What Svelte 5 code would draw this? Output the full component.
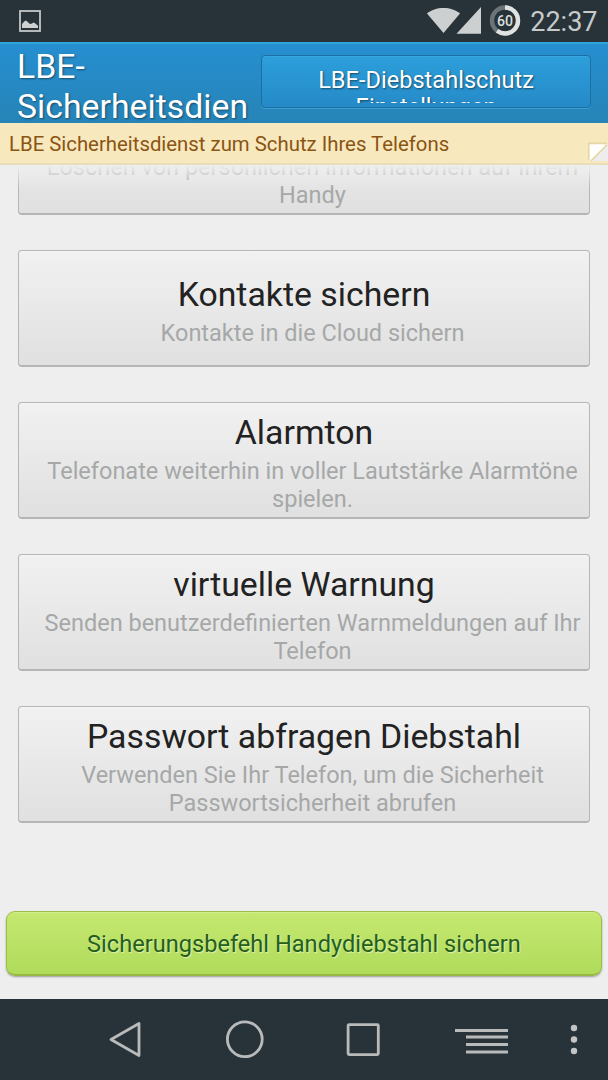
<script lang="ts">
	const battery = 60;
	const ring = 2 * Math.PI * 13;

	const commands = [
		{ title: 'Kontakte sichern', lines: ['Kontakte in die Cloud sichern'] },
		{
			title: 'Alarmton',
			lines: ['Telefonate weiterhin in voller Lautstärke Alarmtöne', 'spielen.']
		},
		{
			title: 'virtuelle Warnung',
			lines: ['Senden benutzerdefinierten Warnmeldungen auf Ihr', 'Telefon']
		},
		{
			title: 'Passwort abfragen Diebstahl',
			lines: ['Verwenden Sie Ihr Telefon, um die Sicherheit', 'Passwortsicherheit abrufen']
		}
	];
</script>

<div class="screen">
	<div class="status-bar">
		<svg class="picture" width="22" height="22" viewBox="0 0 22 22">
			<rect x="1" y="1" width="20" height="20" fill="none" stroke="#c4c7c7" stroke-width="1.8" />
			<path d="M3 18V14L5.5 11.2 7 10.5 9 12.2 11 14 13 13.5 14.5 12.5 16 13.2 19 15.8V18Z" fill="#cfd1d1" />
		</svg>
		<div class="status-icons">
			<svg width="96" height="34" viewBox="0 0 96 34">
				<path d="M0 9.5C8 2 25 2 33 9.5L16.5 29Z" fill="#ccd0d0" />
				<path d="M29.5 29.8 54 3V29.8Z" fill="#ccd0d0" />
				<circle cx="78" cy="16.5" r="13" fill="none" stroke="#6c7478" stroke-width="4.4" />
				<circle
					cx="78"
					cy="16.5"
					r="13"
					fill="none"
					stroke="#e1e3e3"
					stroke-width="4.4"
					stroke-dasharray="{(ring * battery) / 100} {ring}"
					transform="rotate(-90 78 16.5)"
				/>
				<text x="78" y="22.3" text-anchor="middle" textLength="16" lengthAdjust="spacingAndGlyphs" class="level">{battery}</text>
			</svg>
			<span class="clock">22:37</span>
		</div>
	</div>

	<header>
		<h1>LBE-<br />Sicherheitsdien</h1>
		<button class="settings">
			<span>LBE-Diebstahlschutz<br />Einstellungen</span>
		</button>
	</header>

	<div class="notice">
		<span>LBE Sicherheitsdienst zum Schutz Ihres Telefons</span>
		<svg class="fold" width="22" height="22" viewBox="0 0 22 22">
			<path d="M22 3 5 20H22V3Z" fill="#ededed" />
			<path d="M3.5 3.5H20L3.5 20Z" fill="#fff" />
			<path d="M2.7 19V2.2H21M21 4 5 20" fill="none" stroke="#e2d7a5" stroke-width="1.5" />
		</svg>
	</div>

	<main>
		<div class="card partial">
			<p>Löschen von persönlichen Informationen auf Ihrem<br />Handy</p>
		</div>
		{#each commands as command}
			<div class="card">
				<h2>{command.title}</h2>
				<p>
					{#each command.lines as line}
						<span>{line}</span>
					{/each}
				</p>
			</div>
		{/each}
		<div class="fade"></div>
	</main>

	<footer>
		<button class="backup">Sicherungsbefehl Handydiebstahl sichern</button>
	</footer>

	<nav>
		<svg width="608" height="81" viewBox="0 0 608 81" fill="none" stroke="#b9bbbb" stroke-width="2.8">
			<path d="M139 24.5V56.5L111 40.5Z" stroke-linejoin="round" />
			<circle cx="244.8" cy="40.3" r="17.4" />
			<rect x="348.1" y="25.6" width="30.2" height="30" rx="1" />
			<path d="M455 31.5H508M466 38H508M466 45.5H508M466 53H508" />
			<g fill="#c3c5c5" stroke="none">
				<circle cx="574" cy="29" r="3.2" />
				<circle cx="574" cy="40.5" r="3.2" />
				<circle cx="574" cy="52" r="3.2" />
			</g>
		</svg>
	</nav>
</div>

<style>
	:global(body) {
		margin: 0;
		background: #eee;
	}

	.screen {
		display: flex;
		flex-direction: column;
		width: 608px;
		height: 1080px;
		overflow: hidden;
		background: #eee;
		font-family: Roboto, sans-serif;
	}

	.status-bar {
		display: flex;
		justify-content: space-between;
		height: 42px;
		padding: 0 10.5px 0 19px;
		background: #283339;
		box-sizing: border-box;
	}

	.picture {
		margin-top: 10px;
	}

	.status-icons {
		display: flex;
		gap: 7px;
		padding-top: 4px;
	}

	.level {
		font-size: 15.5px;
		font-weight: 500;
		fill: #dcdfdf;
	}

	.clock {
		color: #c6cacb;
		font-size: 27px;
		line-height: 36px;
	}

	header {
		display: flex;
		justify-content: space-between;
		height: 81px;
		padding: 11px 17px 0;
		overflow: hidden;
		border-top: 2px solid #30a5dc;
		background: linear-gradient(#268fd0, #2684b7);
		box-sizing: border-box;
	}

	h1 {
		margin: -8px 0 0;
		color: #fff;
		font-size: 33.8px;
		font-weight: 400;
		line-height: 40px;
		text-shadow: 1px 1px 2px rgba(0, 0, 0, 0.45);
		white-space: nowrap;
	}

	.settings {
		width: 330px;
		height: 53px;
		padding: 11px 0 4px;
		border: 1px solid #1b6fa5;
		border-radius: 4px;
		background: linear-gradient(#2c9fdb, #258ac7);
		box-shadow:
			0 1px 0 #3b9fd0,
			inset 0 1px 0 #38a5dc;
		color: #fff;
		font-family: inherit;
		font-size: 23.6px;
		line-height: 27px;
		text-shadow: 1px 1px 2px rgba(0, 0, 0, 0.5);
	}

	.settings span {
		display: block;
		height: 36px;
		overflow: hidden;
	}

	.notice {
		position: relative;
		flex: none;
		height: 42px;
		padding-left: 9px;
		border-bottom: 2px solid #e8dfb8;
		background: #f8e8bd;
		box-sizing: border-box;
		color: #8a5413;
		font-size: 20.35px;
		line-height: 43px;
	}

	.fold {
		position: absolute;
		right: 0;
		bottom: 0;
	}

	main {
		position: relative;
		display: flex;
		flex-direction: column;
		gap: 35px;
		height: 734px;
		padding: 0 18px;
		overflow: hidden;
		box-sizing: border-box;
	}

	.card {
		display: flex;
		flex: none;
		flex-direction: column;
		align-items: center;
		justify-content: center;
		height: 117px;
		padding-top: 5px;
		border: 1px solid #b5b5b5;
		border-bottom-width: 2px;
		border-radius: 4px;
		background: linear-gradient(#f1f1f1, #e0e0e0);
		box-shadow: inset 0 1px 0 #f8f8f8;
		box-sizing: border-box;
		text-align: center;
	}

	.partial {
		justify-content: flex-end;
		margin-top: -67px;
		padding-bottom: 4px;
	}

	h2 {
		margin: 0;
		color: #222;
		font-size: 33.8px;
		font-weight: 400;
		line-height: 42px;
	}

	.card p {
		margin: 0;
		padding-left: 17px;
		color: #a6a8a8;
		font-size: 23.5px;
		line-height: 27.5px;
		white-space: nowrap;
	}

	.card h2 + p {
		padding-top: 3px;
		padding-bottom: 1px;
		line-height: 28px;
	}

	.card p span {
		display: block;
	}

	.fade {
		position: absolute;
		top: 0;
		right: 0;
		left: 0;
		height: 24px;
		background: linear-gradient(#eee, rgba(238, 238, 238, 0));
	}

	footer {
		height: 100px;
		padding: 12px 6px 0;
		box-sizing: border-box;
	}

	.backup {
		width: 100%;
		height: 65px;
		padding: 2px 0 0;
		border: 1px solid #9dbd47;
		border-bottom: 2px solid #97b943;
		border-radius: 9px;
		background: linear-gradient(#c5e870, #b0dc5b);
		box-shadow:
			0 1px 2px rgba(0, 0, 0, 0.35),
			inset 0 1px 0 #d3ef8c;
		color: #24601a;
		font-family: inherit;
		font-size: 23.6px;
		text-shadow: 1px 1px 1px #e6efb0;
	}

	nav {
		height: 81px;
		background: #283339;
	}
</style>
